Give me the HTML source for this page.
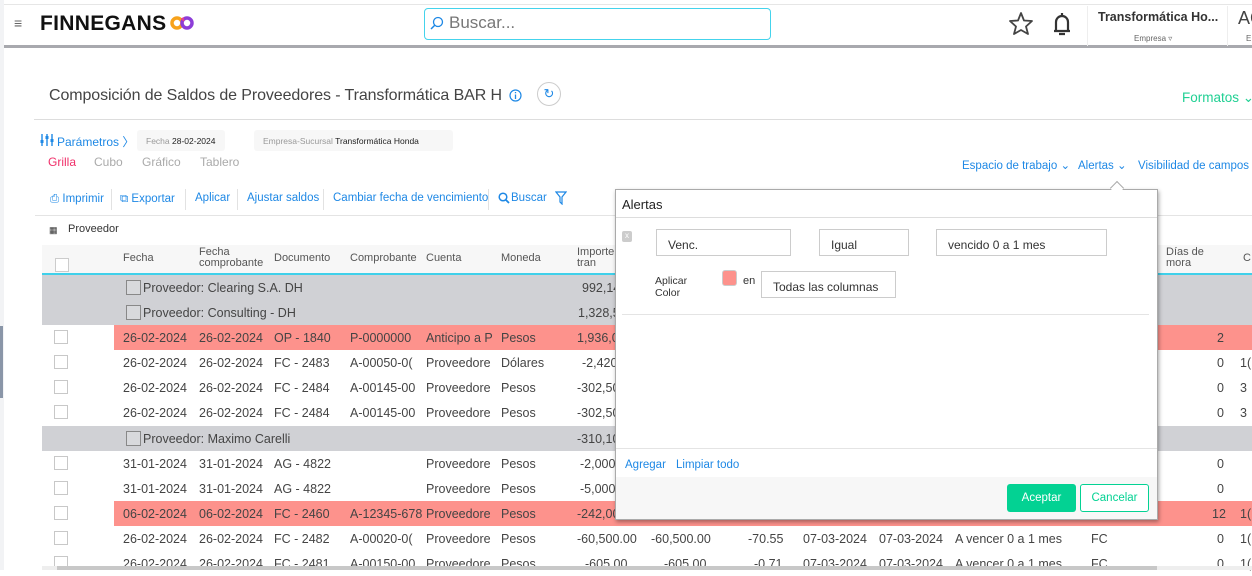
<!DOCTYPE html>
<html><head><meta charset="utf-8">
<style>
*{margin:0;padding:0;box-sizing:border-box}
body{width:1252px;height:570px;overflow:hidden;background:#fff;font-family:"Liberation Sans",sans-serif;position:relative;color:#333}
.a{position:absolute;white-space:nowrap}
.top{position:absolute;left:4px;top:4px;width:1248px;height:44px;background:#fff;border-top:1px solid #e6e6e6;border-bottom:3px solid #a8a9ae}
.row{position:absolute;left:42px;width:1210px;height:25px;font-size:12.5px;color:#444}
.row span{position:absolute;top:6px;white-space:nowrap}
.grp{background:#d0d1d5}
.red{background:linear-gradient(to right,#fff 72px,#fd928c 72px)}
.cb{position:absolute;left:12px;top:5px;width:14px;height:14px;border:1px solid #c8c8c8;background:#fff}
.gcb{position:absolute;left:84px;top:5px;width:15px;height:15px;border:1px solid #888;background:#d8d9dc}
.tb{font-size:11.5px;color:#1e88e5}
.inp{position:absolute;border:1px solid #ccc;background:#fff;font-size:12px;color:#333;padding:8px 0 0 11px}
</style></head><body>
<div class="a" style="left:0;top:0;width:4px;height:570px;background:#f2f3f5"></div>
<div class="a" style="left:0;top:326px;width:3px;height:72px;background:#8a96a8"></div>
<div class="top"></div>
<div class="a" style="left:14px;top:15px;font-size:14px;color:#666">≡</div>
<div class="a" style="left:40px;top:12px;font-size:21px;font-weight:bold;color:#111;letter-spacing:0.3px">FINNEGANS</div>
<svg class="a" style="left:170px;top:15px" width="24" height="16" viewBox="0 0 24 16"><circle cx="7" cy="8" r="5" fill="none" stroke="#f7a21b" stroke-width="3.5"/><circle cx="17" cy="8" r="5" fill="none" stroke="#8d3ed8" stroke-width="3.5"/><path d="M12 5 A5 5 0 0 1 14 4" stroke="#e9408f" stroke-width="3.5" fill="none"/></svg>
<div class="a" style="left:424px;top:8px;width:347px;height:32px;border:1px solid #44d3ec;border-radius:4px"></div>
<svg class="a" style="left:430px;top:16px" width="14" height="14"><circle cx="8" cy="6" r="4.5" fill="none" stroke="#1e88e5" stroke-width="1.3"/><path d="M5 9 L1 13" stroke="#1e88e5" stroke-width="1.5"/></svg>
<div class="a" style="left:449px;top:13px;font-size:17px;color:#777">Buscar...</div>
<svg class="a" style="left:1008px;top:11px" width="26" height="25" viewBox="0 0 26 25"><path d="M13 2 L16 9.5 L24 10 L18 15.5 L20 23 L13 19 L6 23 L8 15.5 L2 10 L10 9.5 Z" fill="none" stroke="#444" stroke-width="1.8" stroke-linejoin="round"/></svg>
<svg class="a" style="left:1051px;top:11px" width="22" height="26" viewBox="0 0 22 26"><path d="M11 2 V4 M5 19 V11 a6 6 0 0 1 12 0 V19 M3 20 H19 M8 23 H14" fill="none" stroke="#333" stroke-width="2.2"/></svg>
<div class="a" style="left:1087px;top:6px;width:1px;height:40px;background:#eee"></div>
<div class="a" style="left:1098px;top:10px;font-size:12.5px;font-weight:bold;color:#333">Transformática Ho...</div>
<div class="a" style="left:1134px;top:34px;font-size:8px;color:#666">Empresa ▿</div>
<div class="a" style="left:1227px;top:6px;width:1px;height:40px;background:#eee"></div>
<div class="a" style="left:1238px;top:8px;font-size:18px;color:#444">AC</div>
<div class="a" style="left:1246px;top:34px;font-size:8px;color:#666">E</div>

<div class="a" style="left:49px;top:87px;font-size:16px;color:#444;letter-spacing:-0.1px">Composición de Saldos de Proveedores - Transformática BAR H</div>
<svg class="a" style="left:509px;top:89px" width="13" height="13"><circle cx="6.5" cy="6.5" r="5.5" fill="none" stroke="#1e88e5" stroke-width="1.2"/><path d="M6.5 5.5V10M6.5 3v1.3" stroke="#1e88e5" stroke-width="1.3"/></svg>
<div class="a" style="left:537px;top:82px;width:24px;height:24px;border:1px solid #ccc;border-radius:50%;background:#fff;color:#1e88e5;font-size:13px;text-align:center;line-height:22px">↻</div>
<div class="a" style="left:1182px;top:90px;font-size:13.5px;color:#20d093">Formatos ⌄</div>
<div class="a" style="left:34px;top:119px;width:1218px;height:1px;background:#ddd"></div>

<svg class="a" style="left:40px;top:133px" width="14" height="14"><path d="M2 1V13M7 1V13M12 1V13" stroke="#1e88e5" stroke-width="1.4"/><rect x="0.5" y="7" width="3" height="3" fill="#1e88e5"/><rect x="5.5" y="3" width="3" height="3" fill="#1e88e5"/><rect x="10.5" y="6" width="3" height="3" fill="#1e88e5"/></svg>
<div class="a" style="left:57px;top:133px;font-size:12px;color:#1e88e5">Parámetros 〉</div>
<div class="a" style="left:137px;top:130px;width:88px;height:21px;background:#f7f7f7;border-radius:3px;font-size:8.5px;color:#999;padding:6px 0 0 9px">Fecha <span style="color:#222">28-02-2024</span></div>
<div class="a" style="left:254px;top:130px;width:199px;height:21px;background:#f7f7f7;border-radius:3px;font-size:8.5px;color:#999;padding:6px 0 0 9px">Empresa-Sucursal <span style="color:#222">Transformática Honda</span></div>
<div class="a" style="left:48px;top:155px;font-size:12px;color:#f0306a">Grilla</div>
<div class="a" style="left:94px;top:155px;font-size:12px;color:#aaa">Cubo</div>
<div class="a" style="left:142px;top:155px;font-size:12px;color:#aaa">Gráfico</div>
<div class="a" style="left:200px;top:155px;font-size:12px;color:#aaa">Tablero</div>
<div class="a tb" style="left:962px;top:158px">Espacio de trabajo ⌄</div>
<div class="a tb" style="left:1078px;top:158px">Alertas ⌄</div>
<div class="a tb" style="left:1138px;top:158px">Visibilidad de campos ⌄</div>

<div class="a tb" style="left:50px;top:193px">⎙ Imprimir</div>
<div class="a" style="left:111px;top:189px;width:1px;height:21px;background:#e2e2e2"></div>
<div class="a tb" style="left:120px;top:193px">⧉ Exportar</div>
<div class="a" style="left:185px;top:189px;width:1px;height:21px;background:#e2e2e2"></div>
<div class="a tb" style="left:195px;top:192px">Aplicar</div>
<div class="a" style="left:237px;top:189px;width:1px;height:21px;background:#e2e2e2"></div>
<div class="a tb" style="left:247px;top:192px">Ajustar saldos</div>
<div class="a" style="left:323px;top:189px;width:1px;height:21px;background:#e2e2e2"></div>
<div class="a tb" style="left:333px;top:192px">Cambiar fecha de vencimiento</div>
<div class="a" style="left:488px;top:189px;width:1px;height:21px;background:#e2e2e2"></div>
<svg class="a" style="left:498px;top:192px" width="12" height="12"><circle cx="5" cy="5" r="3.8" fill="none" stroke="#1e88e5" stroke-width="1.5"/><path d="M8 8 L11 11" stroke="#1e88e5" stroke-width="1.8"/></svg>
<div class="a tb" style="left:511px;top:192px">Buscar</div>
<svg class="a" style="left:555px;top:191px" width="12" height="14"><path d="M1 1H11L7 6V13L5 11V6Z" fill="none" stroke="#1e88e5" stroke-width="1.2"/></svg>
<div class="a" style="left:35px;top:215px;width:1217px;height:1px;background:#e4e4e4"></div>
<div class="a" style="left:49px;top:225px;font-size:9px;color:#333">▦</div>
<div class="a" style="left:68px;top:223px;font-size:11px;color:#333">Proveedor</div>

<div class="a" style="left:42px;top:245px;width:1210px;height:30px;background:#f7f7f7;border-bottom:2px solid #3fd0ea;font-size:11px;color:#555">
<div class="a" style="left:13px;top:13px;width:14px;height:14px;border:1px solid #ccc;background:#fff"></div>
<span class="a" style="left:81px;top:7px">Fecha</span>
<span class="a" style="left:157px;top:2px;line-height:11px">Fecha<br>comprobante</span>
<span class="a" style="left:232px;top:7px">Documento</span>
<span class="a" style="left:308px;top:7px">Comprobante</span>
<span class="a" style="left:384px;top:7px">Cuenta</span>
<span class="a" style="left:459px;top:7px">Moneda</span>
<span class="a" style="left:535px;top:2px;line-height:11px">Importe<br>tran</span>
<span class="a" style="left:1124px;top:2px;line-height:11px">Días de<br>mora</span>
<span class="a" style="left:1201px;top:7px">C</span>
</div>

<div class="row grp" style="top:275px"><div class="gcb"></div><span style="left:101px">Proveedor: Clearing S.A. DH</span><span style="left:540px">992,14</span></div>
<div class="row grp" style="top:300px"><div class="gcb"></div><span style="left:101px">Proveedor: Consulting - DH</span><span style="left:536px">1,328,58</span></div>
<div class="row red" style="top:325px"><div class="cb"></div><span style="left:81px">26-02-2024</span><span style="left:157px">26-02-2024</span><span style="left:232px">OP - 1840</span><span style="left:308px">P-0000000</span><span style="left:384px">Anticipo a P</span><span style="left:459px">Pesos</span><span style="left:535px">1,936,0</span><span style="left:1175px">2</span></div>
<div class="row" style="top:350px"><div class="cb"></div><span style="left:81px">26-02-2024</span><span style="left:157px">26-02-2024</span><span style="left:232px">FC - 2483</span><span style="left:308px">A-00050-0(</span><span style="left:384px">Proveedore</span><span style="left:459px">Dólares</span><span style="left:540px">-2,420</span><span style="left:1175px">0</span><span style="left:1198px">1(</span></div>
<div class="row" style="top:375px"><div class="cb"></div><span style="left:81px">26-02-2024</span><span style="left:157px">26-02-2024</span><span style="left:232px">FC - 2484</span><span style="left:308px">A-00145-00</span><span style="left:384px">Proveedore</span><span style="left:459px">Pesos</span><span style="left:535px">-302,50</span><span style="left:1175px">0</span><span style="left:1198px">3</span></div>
<div class="row" style="top:400px"><div class="cb"></div><span style="left:81px">26-02-2024</span><span style="left:157px">26-02-2024</span><span style="left:232px">FC - 2484</span><span style="left:308px">A-00145-00</span><span style="left:384px">Proveedore</span><span style="left:459px">Pesos</span><span style="left:535px">-302,50</span><span style="left:1175px">0</span><span style="left:1198px">3</span></div>
<div class="row grp" style="top:426px"><div class="gcb"></div><span style="left:101px">Proveedor: Maximo Carelli</span><span style="left:535px">-310,105</span></div>
<div class="row" style="top:451px"><div class="cb"></div><span style="left:81px">31-01-2024</span><span style="left:157px">31-01-2024</span><span style="left:232px">AG - 4822</span><span style="left:384px">Proveedore</span><span style="left:459px">Pesos</span><span style="left:538px">-2,000</span><span style="left:1175px">0</span></div>
<div class="row" style="top:476px"><div class="cb"></div><span style="left:81px">31-01-2024</span><span style="left:157px">31-01-2024</span><span style="left:232px">AG - 4822</span><span style="left:384px">Proveedore</span><span style="left:459px">Pesos</span><span style="left:538px">-5,000</span><span style="left:1175px">0</span></div>
<div class="row red" style="top:501px"><div class="cb"></div><span style="left:81px">06-02-2024</span><span style="left:157px">06-02-2024</span><span style="left:232px">FC - 2460</span><span style="left:308px">A-12345-678</span><span style="left:384px">Proveedore</span><span style="left:459px">Pesos</span><span style="left:535px">-242,00</span><span style="left:1170px">12</span><span style="left:1198px">1(</span></div>
<div class="row" style="top:526px"><div class="cb"></div><span style="left:81px">26-02-2024</span><span style="left:157px">26-02-2024</span><span style="left:232px">FC - 2482</span><span style="left:308px">A-00020-0(</span><span style="left:384px">Proveedore</span><span style="left:459px">Pesos</span><span style="left:535px">-60,500.00</span><span style="left:609px">-60,500.00</span><span style="left:706px">-70.55</span><span style="left:761px">07-03-2024</span><span style="left:837px">07-03-2024</span><span style="left:913px">A vencer 0 a 1 mes</span><span style="left:1049px">FC</span><span style="left:1175px">0</span><span style="left:1198px">1(</span></div>
<div class="row" style="top:551px"><div class="cb"></div><span style="left:81px">26-02-2024</span><span style="left:157px">26-02-2024</span><span style="left:232px">FC - 2481</span><span style="left:308px">A-00150-00</span><span style="left:384px">Proveedore</span><span style="left:459px">Pesos</span><span style="left:543px">-605.00</span><span style="left:622px">-605.00</span><span style="left:712px">-0.71</span><span style="left:761px">07-03-2024</span><span style="left:837px">07-03-2024</span><span style="left:913px">A vencer 0 a 1 mes</span><span style="left:1049px">FC</span><span style="left:1175px">0</span><span style="left:1198px">1(</span></div>
<div class="a" style="left:42px;top:566px;width:1210px;height:4px;background:#eee"></div>
<div class="a" style="left:57px;top:566px;width:1100px;height:4px;background:#c8c8c8"></div>

<div class="a" style="left:615px;top:189px;width:543px;height:331px;background:#fff;border:1px solid #aaa;box-shadow:1px 2px 4px rgba(0,0,0,0.35)">
<div class="a" style="left:6px;top:7px;font-size:13px;color:#222">Alertas</div>
<div class="a" style="left:0;top:27px;width:541px;height:1px;background:#ddd"></div>
<div class="a" style="left:6px;top:41px;width:10px;height:11px;background:#ccc;border-radius:2px;font-size:8px;color:#fff;text-align:center">x</div>
<div class="inp" style="left:40px;top:39px;width:135px;height:27px">Venc.</div>
<div class="inp" style="left:203px;top:39px;width:90px;height:27px">Igual</div>
<div class="inp" style="left:320px;top:39px;width:171px;height:27px">vencido 0 a 1 mes</div>
<div class="a" style="left:39px;top:85px;font-size:10.5px;color:#333;line-height:12px">Aplicar<br>Color</div>
<div class="a" style="left:106px;top:80px;width:15px;height:16px;background:#fd928c;border:1px solid #ccc;border-radius:3px"></div>
<div class="a" style="left:127px;top:85px;font-size:11px;color:#333">en</div>
<div class="inp" style="left:145px;top:81px;width:135px;height:27px">Todas las columnas</div>
<div class="a" style="left:6px;top:124px;width:527px;height:1px;background:#e4e4e4"></div>
<div class="a" style="left:0;top:258px;width:541px;height:1px;background:#e4e4e4"></div>
<div class="a" style="left:9px;top:269px;font-size:11.5px;color:#1e88e5">Agregar</div>
<div class="a" style="left:60px;top:269px;font-size:11.5px;color:#1e88e5">Limpiar todo</div>
<div class="a" style="left:0;top:287px;width:541px;height:42px;background:#f7f7f7"></div>
<div class="a" style="left:391px;top:294px;width:69px;height:28px;background:#03d293;border-radius:3px;color:#fff;font-size:11.5px;text-align:center;line-height:28px">Aceptar</div>
<div class="a" style="left:464px;top:294px;width:69px;height:28px;background:#fff;border:1px solid #03d293;border-radius:3px;color:#03d293;font-size:11.5px;text-align:center;line-height:26px">Cancelar</div>
</div>
<div class="a" style="left:1112px;top:183px;width:10px;height:10px;background:#fff;border-left:1px solid #aaa;border-top:1px solid #aaa;transform:rotate(45deg)"></div>
</body></html>
